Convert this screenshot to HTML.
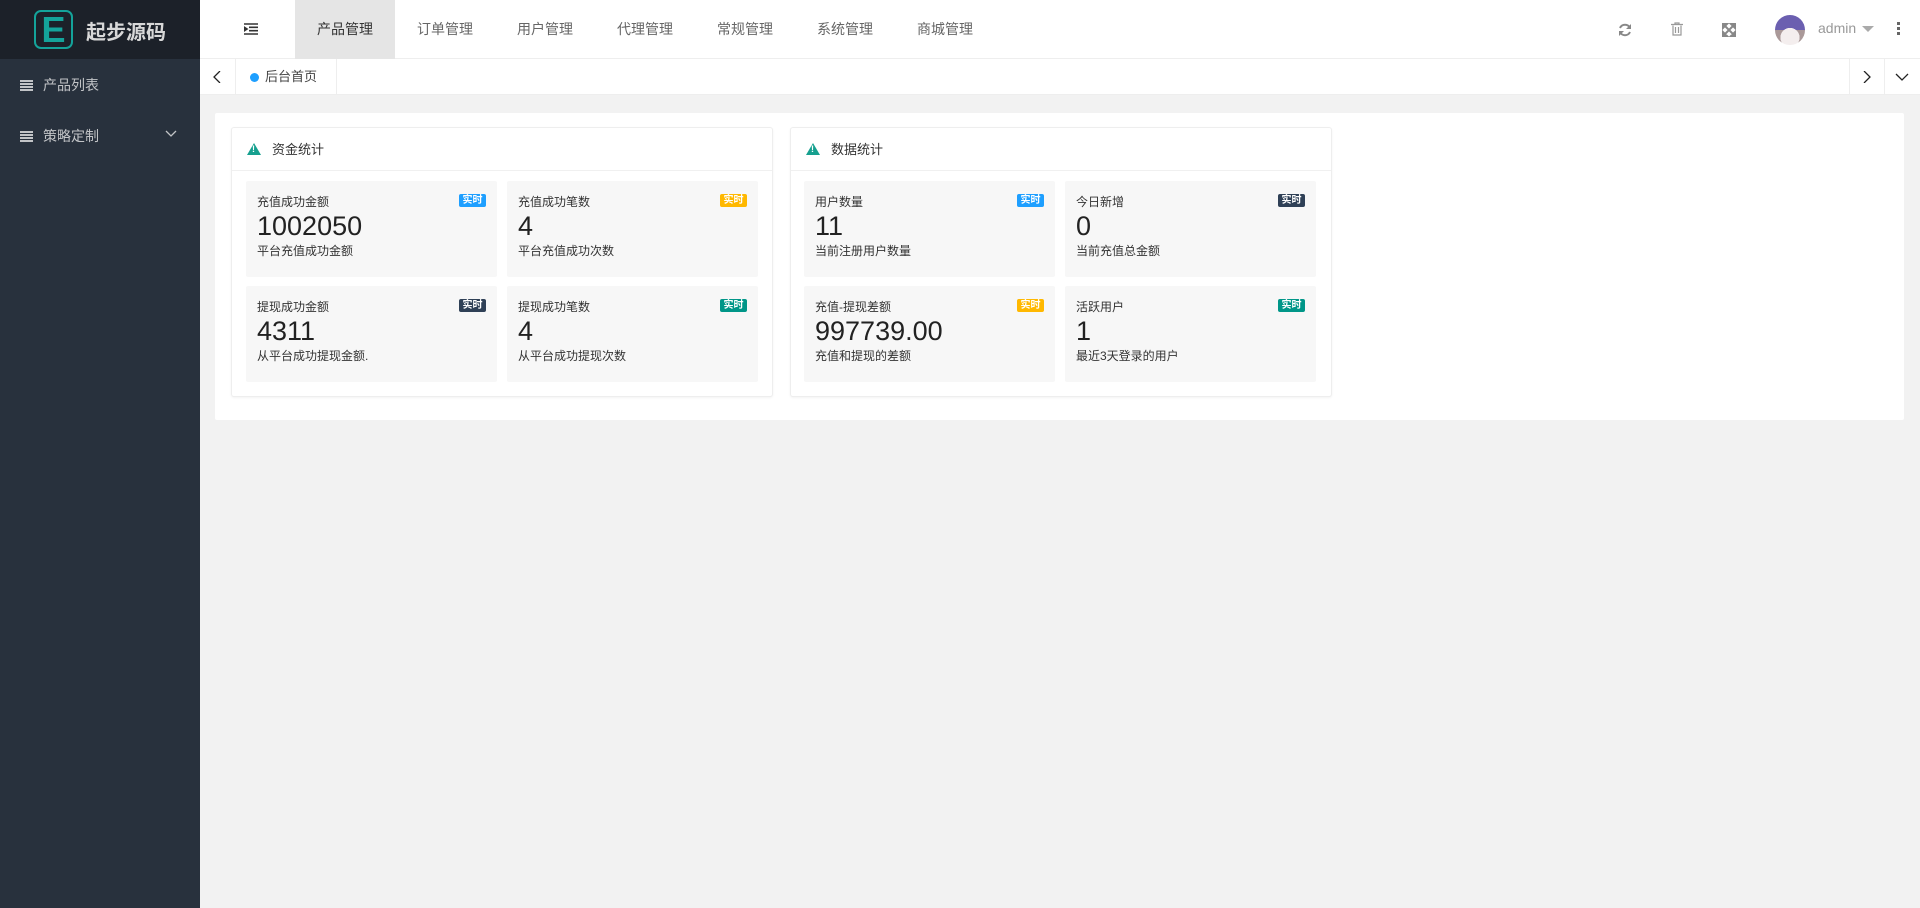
<!DOCTYPE html>
<html><head><meta charset="utf-8"><style>
*{margin:0;padding:0;box-sizing:border-box}
body{width:1920px;height:908px;overflow:hidden;background:#f2f2f2;font-family:"Liberation Sans","Noto Sans CJK SC",sans-serif;position:relative}
.side{position:absolute;left:0;top:0;width:200px;height:908px;background:#28313d}
.logo{height:59px;background:#1c2129;position:relative}
.logo .e{position:absolute;left:34px;top:10px;width:39px;height:39px;border:2px solid #14a39a;border-radius:7px;color:#14a39a;font:bold 36px/35px "Liberation Sans",sans-serif;text-align:center}
.logo .t{position:absolute;left:86px;top:16px;color:#d8d8d8;font-size:20px;font-weight:bold;letter-spacing:0px}
.si{position:absolute;left:20px;color:#c2c4c7;font-size:14px}
.si i{display:inline-block;width:13px;height:11px;margin-right:10px;vertical-align:-1px;background:repeating-linear-gradient(#c2c4c7 0 2px,transparent 2px 3px)}
.top{position:absolute;left:200px;top:0;right:0;height:59px;background:#fff;border-bottom:1px solid #eee}
.mi{position:absolute;top:0;height:59px;line-height:59px;width:100px;text-align:center;font-size:14px;color:#666}
.mi.act{background:#e5e5e5;color:#333}
.tabs{position:absolute;left:200px;top:59px;right:0;height:36px;background:#fff;border-bottom:1px solid #eee}
.card{position:absolute;left:215px;top:113px;width:1689px;height:307px;background:#fff;border-radius:2px}
.pan{position:absolute;top:127px;width:542px;height:270px;border:1px solid #eee;border-radius:3px;background:#fff;box-shadow:0 1px 2px rgba(0,0,0,.05)}
.ph{height:43px;border-bottom:1px solid #f0f0f0;line-height:43px;padding-left:40px;font-size:13px;color:#333;position:relative}
.ph:before{content:"";position:absolute;left:15px;top:15px;border-left:7px solid transparent;border-right:7px solid transparent;border-bottom:12px solid #16a08f}
.ph:after{content:"!";position:absolute;left:20px;top:16px;color:#fff;font-size:9px;line-height:11px;font-weight:bold}
.bx{position:absolute;width:251px;height:96px;background:#f7f7f7;border-radius:2px;padding:14px 11px}
.bx .a{font-size:12px;color:#333;line-height:14px}
.bx .n{font-size:27px;color:#222;line-height:30px;margin-top:2px}
.bx .b{font-size:12px;color:#333;line-height:14px;margin-top:3px}
.bg{position:absolute;right:11px;top:13px;width:27px;height:13px;border-radius:2px;color:#fff;font-size:10px;line-height:13px;text-align:center;font-weight:bold}
</style></head><body>
<div class="side">
<div class="logo"><div class="e">E</div><div class="t">起步源码</div></div>
<div class="si" style="top:75px"><i></i>产品列表</div>
<div class="si" style="top:126px"><i></i>策略定制</div>
<svg style="position:absolute;left:165px;top:130px" width="12" height="8"><path d="M1 1l5 5 5-5" stroke="#c2c4c7" fill="none" stroke-width="1.3"/></svg>
</div>
<div class="top">
<svg style="position:absolute;left:44px;top:23px" width="14" height="12"><path d="M0 1h14M5 4.3h9M5 7.7h9M0 11h14M0 4l3 2-3 2z" stroke="#333" stroke-width="1.6" fill="#333"/></svg>
<div class="mi act" style="left:95px">产品管理</div>
<div class="mi" style="left:195px">订单管理</div>
<div class="mi" style="left:295px">用户管理</div>
<div class="mi" style="left:395px">代理管理</div>
<div class="mi" style="left:495px">常规管理</div>
<div class="mi" style="left:595px">系统管理</div>
<div class="mi" style="left:695px">商城管理</div>
<svg style="position:absolute;left:1418px;top:23px" width="14" height="14"><path d="M12 5A5.5 5.5 0 0 0 2 5M2 9a5.5 5.5 0 0 0 10 0" stroke="#888" stroke-width="2" fill="none"/><path d="M13 1v5H8zM1 13V8h5z" fill="#888"/></svg>
<svg style="position:absolute;left:1471px;top:22px" width="12" height="14"><path d="M0 2.5h12M4 2.5V1h4v1.5M2 3.5v9.5h8V3.5M4.5 5v6M7.5 5v6" stroke="#999" stroke-width="1.2" fill="none"/></svg>
<svg style="position:absolute;left:1522px;top:23px" width="14" height="14"><path d="M1 1h4L1 5zM13 1v4L9 1zM1 13V9l4 4zM13 13H9l4-4zM3 3l8 8M11 3l-8 8" stroke="#888" stroke-width="2" fill="#888"/></svg>
<div style="position:absolute;left:1575px;top:15px;width:30px;height:30px;border-radius:50%;background:radial-gradient(circle at 50% 75%,#f4eeee 0 35%,transparent 36%),linear-gradient(#6b5fb0 0 50%,#a99 50%)"></div>
<div style="position:absolute;left:1618px;top:20px;font-size:14px;color:#999">admin</div>
<div style="position:absolute;left:1662px;top:26px;border-left:6px solid transparent;border-right:6px solid transparent;border-top:6px solid #aaa"></div>
<div style="position:absolute;left:1697px;top:22px;width:3px;height:3px;background:#666;box-shadow:0 5px #666,0 10px #666"></div>
</div>
<div class="tabs">
<div style="position:absolute;left:0;top:0;width:36px;height:36px;border-right:1px solid #eee"></div>
<svg style="position:absolute;left:13px;top:12px" width="8" height="12"><path d="M7 0L1 6l6 6" stroke="#222" fill="none" stroke-width="1.3"/></svg>
<div style="position:absolute;left:36px;top:0;width:101px;height:36px;border-right:1px solid #eee;font-size:13px;color:#444;line-height:36px;padding-left:29px">后台首页</div>
<div style="position:absolute;left:50px;top:14px;width:9px;height:9px;border-radius:50%;background:#1e9fff"></div>
<div style="position:absolute;left:1649px;top:0;width:71px;height:36px;border-left:1px solid #eee"></div>
<div style="position:absolute;left:1684px;top:0;height:36px;border-left:1px solid #eee"></div>
<svg style="position:absolute;left:1663px;top:12px" width="8" height="12"><path d="M1 0l6 6-6 6" stroke="#222" fill="none" stroke-width="1.3"/></svg>
<svg style="position:absolute;left:1695px;top:14px" width="14" height="8"><path d="M1 1l6 6 6-6" stroke="#222" fill="none" stroke-width="1.3"/></svg>
</div>
<div class="card"></div>
<div class="pan" style="left:231px"><div class="ph">资金统计</div></div>
<div class="pan" style="left:790px"><div class="ph">数据统计</div></div>

<div class="bx" style="left:246px;top:181px"><span class="bg" style="background:#1e9fff">实时</span><div class="a">充值成功金额</div><div class="n">1002050</div><div class="b">平台充值成功金额</div></div>
<div class="bx" style="left:507px;top:181px"><span class="bg" style="background:#ffb800">实时</span><div class="a">充值成功笔数</div><div class="n">4</div><div class="b">平台充值成功次数</div></div>
<div class="bx" style="left:246px;top:286px"><span class="bg" style="background:#2f4056">实时</span><div class="a">提现成功金额</div><div class="n">4311</div><div class="b">从平台成功提现金额.</div></div>
<div class="bx" style="left:507px;top:286px"><span class="bg" style="background:#009688">实时</span><div class="a">提现成功笔数</div><div class="n">4</div><div class="b">从平台成功提现次数</div></div>

<div class="bx" style="left:804px;top:181px"><span class="bg" style="background:#1e9fff">实时</span><div class="a">用户数量</div><div class="n">11</div><div class="b">当前注册用户数量</div></div>
<div class="bx" style="left:1065px;top:181px"><span class="bg" style="background:#2f4056">实时</span><div class="a">今日新增</div><div class="n">0</div><div class="b">当前充值总金额</div></div>
<div class="bx" style="left:804px;top:286px"><span class="bg" style="background:#ffb800">实时</span><div class="a">充值-提现差额</div><div class="n">997739.00</div><div class="b">充值和提现的差额</div></div>
<div class="bx" style="left:1065px;top:286px"><span class="bg" style="background:#009688">实时</span><div class="a">活跃用户</div><div class="n">1</div><div class="b">最近3天登录的用户</div></div>
</body></html>
